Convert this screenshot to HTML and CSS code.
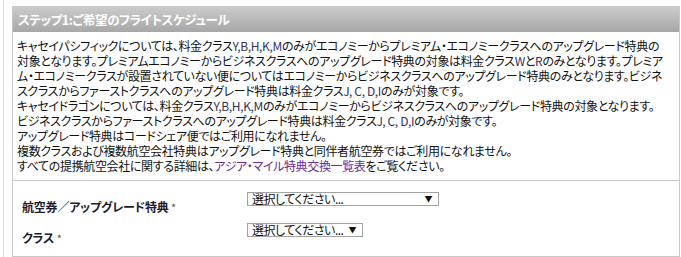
FILE: index.html
```html
<!DOCTYPE html>
<html lang="ja">
<head>
<meta charset="utf-8">
<title>ステップ1:ご希望のフライトスケジュール</title>
<link rel="stylesheet" href="styles.css">
</head>
<body>
<div class="page">
  <section class="panel">
    <h2 class="panel-title">ステップ1:ご希望のフライトスケジュール</h2>
    <div class="notes">
      <p class="line">キャセイパシフィックについては、料金クラス<span class="code">Y,B,H,K,M</span>のみがエコノミーからプレミアム・エコノミークラスへのアップグレード特典の</p>
      <p class="line">対象となります。プレミアムエコノミーからビジネスクラスへのアップグレード特典の対象は料金クラス<span class="code">W</span>と<span class="code">R</span>のみとなります。プレミア</p>
      <p class="line">ム・エコノミークラスが設置されていない便についてはエコノミーからビジネスクラスへのアップグレード特典のみとなります。ビジネ</p>
      <p class="line">スクラスからファーストクラスへのアップグレード特典は料金クラス<span class="code">J, C, D,I</span>のみが対象です。</p>
      <p class="line">キャセイドラゴンについては、料金クラス<span class="code">Y,B,H,K,M</span>のみがエコノミーからビジネスクラスへのアップグレード特典の対象となります。</p>
      <p class="line">ビジネスクラスからファーストクラスへのアップグレード特典は料金クラス<span class="code">J, C, D,I</span>のみが対象です。</p>
      <p class="line">アップグレード特典はコードシェア便ではご利用になれません。</p>
      <p class="line">複数クラスおよび複数航空会社特典はアップグレード特典と同伴者航空券ではご利用になれません。</p>
      <p class="line">すべての提携航空会社に関する詳細は、<a class="link" href="#">アジア・マイル特典交換一覧表</a>をご覧ください。</p>
    </div>
    <div class="form">
      <div class="row">
        <label class="label">航空券／アップグレード特典 <span class="req">*</span></label>
        <div class="select select-wide"><span class="value">選択してください...</span><span class="arrow">▼</span></div>
      </div>
      <div class="row">
        <label class="label">クラス <span class="req">*</span></label>
        <div class="select select-narrow"><span class="value">選択してください...</span><span class="arrow">▼</span></div>
      </div>
    </div>
  </section>
</div>
</body>
</html>
```
FILE: styles.css
```css
html, body {
  margin: 0;
  padding: 0;
  background: #ffffff;
}
body {
  font-family: "Noto Sans CJK JP", "Noto Sans", sans-serif;
  color: #111111;
  width: 681px;
  height: 257px;
  overflow: hidden;
}
.page {
  margin-left: 3px;
  border-left: 1px solid #dcdcdc;
  padding: 6px 1px 0 8px;
  height: 251px;
}
.panel {
  border: 1px solid #c9c9c9;
  height: 251px;
  box-sizing: border-box;
  display: flex;
  flex-direction: column;
}
.panel-title {
  margin: 0;
  height: 25px;
  line-height: 25px;
  padding-left: 5px;
  font-size: 12.5px;
  font-weight: bold;
  color: #ffffff;
  background: linear-gradient(#cbcbcb, #a7a7a7);
  font-feature-settings: "palt";
  letter-spacing: -0.4px;
}
.notes {
  padding: 6px 4px 7px 4px;
  font-size: 12px;
  line-height: 15px;
  letter-spacing: -0.35px;
  font-feature-settings: "palt";
}
.line {
  margin: 0;
  white-space: nowrap;
}
.code {
  color: #30345a;
}
.link {
  color: #6a2c91;
  text-decoration: none;
}
.form {
  border-top: 1px solid #c9c9c9;
  padding: 11px 0 0 9px;
}
.row {
  display: flex;
  align-items: flex-start;
  height: 31px;
}
.label {
  width: 225px;
  margin-top: 7px;
  font-size: 12px;
  line-height: 15px;
  font-weight: bold;
  color: #1c1c2c;
  letter-spacing: -0.2px;
  font-feature-settings: "palt";
}
.req {
  color: #555555;
  font-weight: normal;
  font-size: 11px;
}
.select {
  box-sizing: border-box;
  height: 14px;
  border: 1px solid #a3a3a3;
  background: #ffffff;
  display: flex;
  align-items: center;
  justify-content: space-between;
  padding: 0 6px 0 4px;
  font-size: 12px;
  line-height: 12px;
  letter-spacing: -0.5px;
  color: #111111;
  font-feature-settings: "palt";
}
.select-wide {
  width: 192px;
}
.select-narrow {
  width: 116px;
}
.arrow {
  font-size: 8px;
  line-height: 12px;
  color: #111111;
}
```
